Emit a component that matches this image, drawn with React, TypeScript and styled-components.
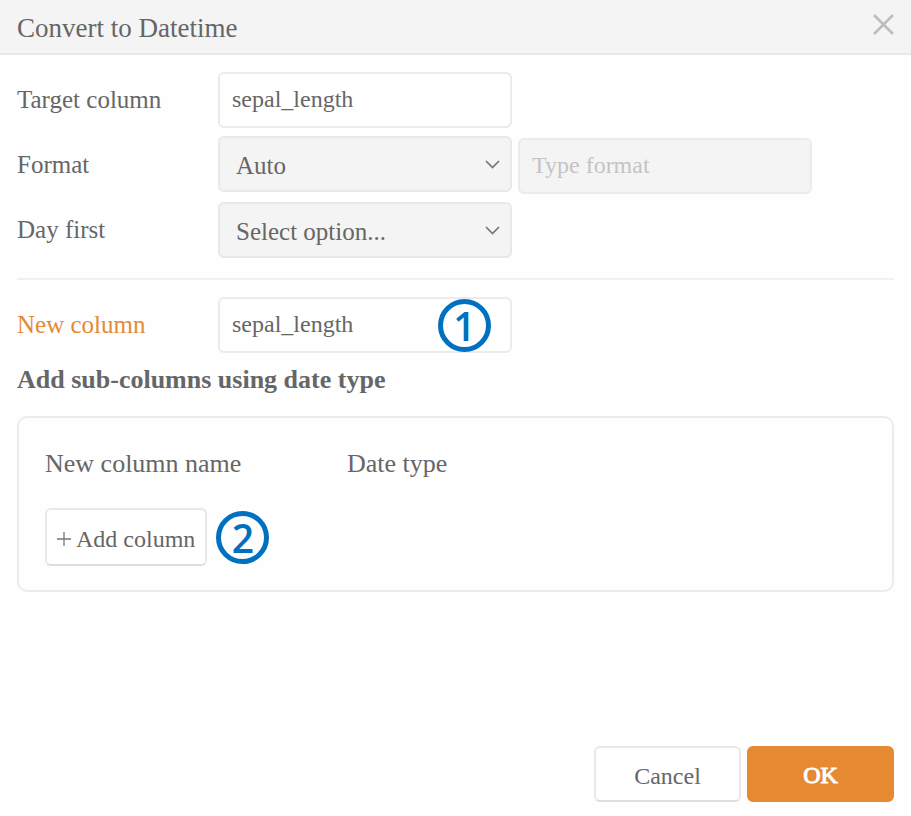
import React, { useState } from "react";
import styled, { createGlobalStyle } from "styled-components";

const GlobalStyle = createGlobalStyle`
  * { box-sizing: border-box; }
  body {
    margin: 0;
    background: #fefefe;
    color: #666;
    font-family: "Liberation Serif", "Times New Roman", serif;
  }
  button, input, select { font-family: inherit; color: inherit; }
`;

const Dialog = styled.form`
  display: flex;
  flex-direction: column;
  min-height: 100vh;
`;

const Header = styled.header`
  display: flex;
  align-items: center;
  justify-content: space-between;
  height: 55px;
  padding: 0 16px 0 17px;
  background: #f4f4f4;
  border-bottom: 2px solid #e8e8e8;
`;

const Title = styled.h1`
  margin: 0;
  padding-top: 2px;
  font-size: 27px;
  line-height: 32px;
  font-weight: 400;
`;

const CloseButton = styled.button`
  display: flex;
  margin: 0 0 4px;
  padding: 0;
  border: 0;
  background: none;
  color: #bdbdbd;
  cursor: pointer;
`;

const Body = styled.main`
  flex: 1;
  padding: 17px 17px 24px;
`;

const Fields = styled.div`
  display: flex;
  flex-direction: column;
  gap: 8px;
`;

const Row = styled.div`
  display: flex;
  align-items: center;
`;

const Label = styled.label<{ $accent?: boolean }>`
  flex: 0 0 201px;
  font-size: 25px;
  line-height: 32px;
  color: ${(p) => (p.$accent ? "#e58a33" : "inherit")};
`;

const FieldSlot = styled.div<{ $low?: boolean }>`
  position: relative;
  align-self: flex-start;
  flex: 0 1 294px;
  min-width: 0;
  margin-top: ${(p) => (p.$low ? "2px" : "0")};
  margin-left: ${(p) => (p.$low ? "6px" : "0")};
`;

const TextInput = styled.input`
  display: block;
  width: 100%;
  height: 56px;
  padding: 0 12px 2px;
  border: 2px solid #ebebeb;
  border-radius: 6px;
  background: #fff;
  font-size: 24px;
  &:disabled { background: #f4f4f4; }
  &::placeholder { color: #c4c4c4; opacity: 1; }
`;

const Select = styled.select`
  display: block;
  width: 100%;
  height: 56px;
  padding: 2px 44px 0 16px;
  border: 2px solid #e8e8e8;
  border-radius: 6px;
  background: #f4f4f4;
  appearance: none;
  font-size: 25px;
`;

const Chevron = styled.svg`
  position: absolute;
  top: 24px;
  right: 12px;
  pointer-events: none;
`;

const Divider = styled.hr`
  margin: 20px 0 17px;
  border: 0;
  border-top: 2px solid #f0f0f0;
`;

const SectionTitle = styled.h2`
  margin: 11px 0 20px;
  font-size: 26px;
  line-height: 32px;
  font-weight: 700;
`;

const Panel = styled.section`
  padding: 30px 26px 24px;
  border: 2px solid #ececec;
  border-radius: 10px;
`;

const PanelHead = styled.div`
  display: flex;
  margin-bottom: 28px;
  font-size: 26px;
  line-height: 32px;
`;

const PanelHeading = styled.span`
  flex: 0 1 302px;
`;

const PanelActions = styled.div`
  display: flex;
  align-items: center;
  gap: 9px;
`;

const Button = styled.button<{ $primary?: boolean }>`
  min-width: ${(p) => (p.$primary ? "147px" : "0")};
  height: 56px;
  padding: 4px 10px 0;
  border: 2px solid ${(p) => (p.$primary ? "#e58a33" : "#e8e8e8")};
  border-bottom-color: ${(p) => (p.$primary ? "#e58a33" : "#dedede")};
  border-radius: 6px;
  background: ${(p) => (p.$primary ? "#e58a33" : "#fff")};
  color: ${(p) => (p.$primary ? "#fff" : "inherit")};
  font-size: 24px;
  cursor: pointer;
`;

const AddButton = styled(Button)`
  display: flex;
  align-items: center;
  gap: 5px;
  height: 58px;
`;

const CancelButton = styled(Button)`
  min-width: 147px;
`;

const OkButton = styled(Button)`
  padding-top: 2px;
  -webkit-text-stroke: 1px #fff;
`;

const Badge = styled.span`
  display: flex;
  align-items: center;
  justify-content: center;
  width: 53px;
  height: 53px;
  border: 5px solid #0070c0;
  border-radius: 50%;
  color: #0070c0;
  font: 600 39px/43px "Open Sans", "Noto Sans", sans-serif;
`;

const FieldBadge = styled(Badge)`
  position: absolute;
  top: 2px;
  right: 21px;
  pointer-events: none;
`;

const Footer = styled.footer`
  display: flex;
  justify-content: flex-end;
  gap: 6px;
  padding: 0 17px 14px;
`;

function ChevronDown() {
  return (
    <Chevron width="15" height="9" viewBox="0 0 15 9" fill="none" stroke="#777" strokeWidth="1.7" aria-hidden="true">
      <path d="M1 1l6.5 6.5L14 1" />
    </Chevron>
  );
}

export default function App() {
  const [target, setTarget] = useState("sepal_length");
  const [newColumn, setNewColumn] = useState("sepal_length");

  return (
    <>
      <GlobalStyle />
      <Dialog onSubmit={(e) => e.preventDefault()}>
        <Header>
          <Title>Convert to Datetime</Title>
          <CloseButton type="button" aria-label="Close">
            <svg width="23" height="23" viewBox="0 0 23 23" fill="none" stroke="currentColor" strokeWidth="2.6" aria-hidden="true">
              <path d="M2 2l19 19M21 2L2 21" />
            </svg>
          </CloseButton>
        </Header>
        <Body>
          <Fields>
            <Row>
              <Label htmlFor="target">Target column</Label>
              <FieldSlot>
                <TextInput id="target" value={target} onChange={(e) => setTarget(e.target.value)} />
              </FieldSlot>
            </Row>
            <Row>
              <Label htmlFor="format">Format</Label>
              <FieldSlot>
                <Select id="format">
                  <option>Auto</option>
                </Select>
                <ChevronDown />
              </FieldSlot>
              <FieldSlot $low>
                <TextInput aria-label="Type format" placeholder="Type format" disabled />
              </FieldSlot>
            </Row>
            <Row>
              <Label htmlFor="dayfirst">Day first</Label>
              <FieldSlot>
                <Select id="dayfirst">
                  <option>Select option...</option>
                </Select>
                <ChevronDown />
              </FieldSlot>
            </Row>
          </Fields>
          <Divider />
          <Row>
            <Label htmlFor="newcolumn" $accent>New column</Label>
            <FieldSlot>
              <TextInput id="newcolumn" value={newColumn} onChange={(e) => setNewColumn(e.target.value)} />
              <FieldBadge>1</FieldBadge>
            </FieldSlot>
          </Row>
          <SectionTitle>Add sub-columns using date type</SectionTitle>
          <Panel>
            <PanelHead>
              <PanelHeading>New column name</PanelHeading>
              <PanelHeading>Date type</PanelHeading>
            </PanelHead>
            <PanelActions>
              <AddButton type="button">
                <svg width="14" height="14" viewBox="0 0 14 14" stroke="#777" strokeWidth="1.3" aria-hidden="true">
                  <path d="M7 0v14M0 7h14" />
                </svg>
                Add column
              </AddButton>
              <Badge>2</Badge>
            </PanelActions>
          </Panel>
        </Body>
        <Footer>
          <CancelButton type="button">Cancel</CancelButton>
          <OkButton type="submit" $primary>OK</OkButton>
        </Footer>
      </Dialog>
    </>
  );
}
